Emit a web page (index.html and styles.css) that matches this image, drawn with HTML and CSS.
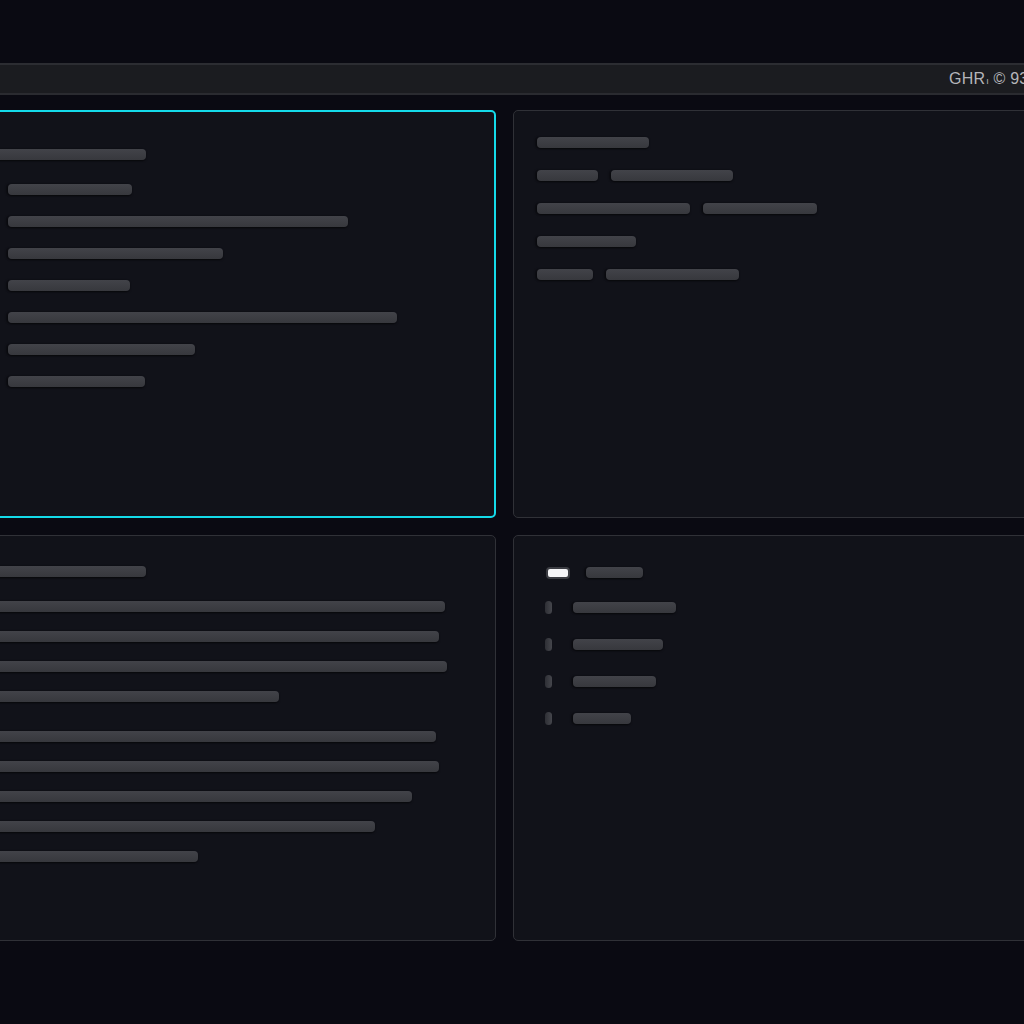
FILE: index.html
```html
<!DOCTYPE html>
<html lang="en">
<head>
    <meta charset="UTF-8">
    <meta name="viewport" content="width=device-width, initial-scale=1.0">
    <title>Dashboard</title>
    <link rel="stylesheet" href="styles.css">
</head>
<body>
    <div class="page">
        <div class="topbar">
            <span class="brand">GHR<small>ı</small> © 93</span>
        </div>

        <div class="grid">
            <!-- top left, selected -->
            <div class="panel panel-active">
                <div class="bar title" style="width:152px"></div>
                <div class="list">
                    <div class="bar" style="width:124px"></div>
                    <div class="bar" style="width:340px"></div>
                    <div class="bar" style="width:215px"></div>
                    <div class="bar" style="width:122px"></div>
                    <div class="bar" style="width:389px"></div>
                    <div class="bar" style="width:187px"></div>
                    <div class="bar" style="width:137px"></div>
                </div>
            </div>

            <!-- top right -->
            <div class="panel panel-tr">
                <div class="bar" style="width:112px"></div>
                <div class="rows">
                    <div class="row">
                        <div class="bar" style="width:61px"></div>
                        <div class="bar" style="width:122px"></div>
                    </div>
                    <div class="row">
                        <div class="bar" style="width:153px"></div>
                        <div class="bar" style="width:114px"></div>
                    </div>
                    <div class="row">
                        <div class="bar" style="width:99px"></div>
                    </div>
                    <div class="row">
                        <div class="bar" style="width:56px"></div>
                        <div class="bar" style="width:133px"></div>
                    </div>
                </div>
            </div>

            <!-- bottom left -->
            <div class="panel panel-bl">
                <div class="bar title" style="width:151px"></div>
                <div class="para">
                    <div class="bar" style="width:450px"></div>
                    <div class="bar" style="width:444px"></div>
                    <div class="bar" style="width:452px"></div>
                    <div class="bar" style="width:284px"></div>
                </div>
                <div class="para">
                    <div class="bar" style="width:441px"></div>
                    <div class="bar" style="width:444px"></div>
                    <div class="bar" style="width:417px"></div>
                    <div class="bar" style="width:380px"></div>
                    <div class="bar" style="width:203px"></div>
                </div>
            </div>

            <!-- bottom right -->
            <div class="panel panel-br">
                <div class="opt opt-first">
                    <span class="toggle"></span>
                    <div class="bar" style="width:57px"></div>
                </div>
                <div class="opt">
                    <span class="dot"></span>
                    <div class="bar" style="width:103px"></div>
                </div>
                <div class="opt">
                    <span class="dot"></span>
                    <div class="bar" style="width:90px"></div>
                </div>
                <div class="opt">
                    <span class="dot"></span>
                    <div class="bar" style="width:83px"></div>
                </div>
                <div class="opt">
                    <span class="dot"></span>
                    <div class="bar" style="width:58px"></div>
                </div>
            </div>
        </div>
    </div>
</body>
</html>
```

FILE: styles.css
```css
*{
    margin: 0;
    padding: 0;
    box-sizing: border-box;
}
body{
    background-color: #0a0a12;
    font-family: "Liberation Sans", Arial, sans-serif;
    overflow: hidden;
    height: 1024px;
}
.page{
    width: 1120px;
    margin-left: -24px;
    padding-top: 63px;
}
.topbar{
    height: 32px;
    background-color: #1b1c20;
    border-top: 2px solid #2c2d32;
    border-bottom: 2px solid #2a2b30;
    display: flex;
    align-items: center;
    padding-left: 973px;
}
.brand{
    color: #b4b5b9;
    font-size: 16px;
    letter-spacing: 0.2px;
    white-space: nowrap;
}
.brand small{
    font-size: 9px;
    margin-left: 1px;
}
.grid{
    display: grid;
    grid-template-columns: 520px 1fr;
    grid-template-rows: 408px 406px;
    gap: 17px;
    margin-top: 15px;
}
.panel{
    background-color: #111219;
    border: 1px solid #303137;
    border-radius: 5px;
}
.panel-active{
    border: 2px solid #14dbe9;
    padding: 37px 24px 0 22px;
}
.bar{
    height: 11px;
    border-radius: 4px;
    background: linear-gradient(#424349, #37383d);
    box-shadow: -2px 0 2px rgba(0,0,0,0.35), 0 1px 2px rgba(0,0,0,0.5);
    flex-shrink: 0;
}
.title{
    margin-left: -6px;
}
.list{
    display: flex;
    flex-direction: column;
    gap: 21px;
    margin-top: 24px;
    padding-left: 8px;
}
.panel-tr{
    padding: 26px 24px 0 23px;
}
.rows{
    display: flex;
    flex-direction: column;
    gap: 22px;
    margin-top: 22px;
}
.row{
    display: flex;
    gap: 13px;
}
.panel-bl{
    padding: 30px 24px 0 24px;
}
.para{
    display: flex;
    flex-direction: column;
    gap: 19px;
    margin-left: -6px;
    margin-top: 24px;
}
.para + .para{
    margin-top: 29px;
}
.panel-br{
    padding: 31px 24px 0 31px;
    display: flex;
    flex-direction: column;
    gap: 26px;
}
.opt{
    display: flex;
    align-items: center;
    gap: 21px;
    height: 11px;
}
.opt-first{
    gap: 16px;
    margin-bottom: -2px;
}
.toggle{
    width: 24px;
    height: 12px;
    border: 2px solid #3b3c42;
    border-radius: 4px;
    background-color: #f5f5f7;
    margin-left: 1px;
}
.dot{
    width: 7px;
    height: 13px;
    border-radius: 4px;
    background: linear-gradient(90deg, #2e2f35, #45464c);
}
```
